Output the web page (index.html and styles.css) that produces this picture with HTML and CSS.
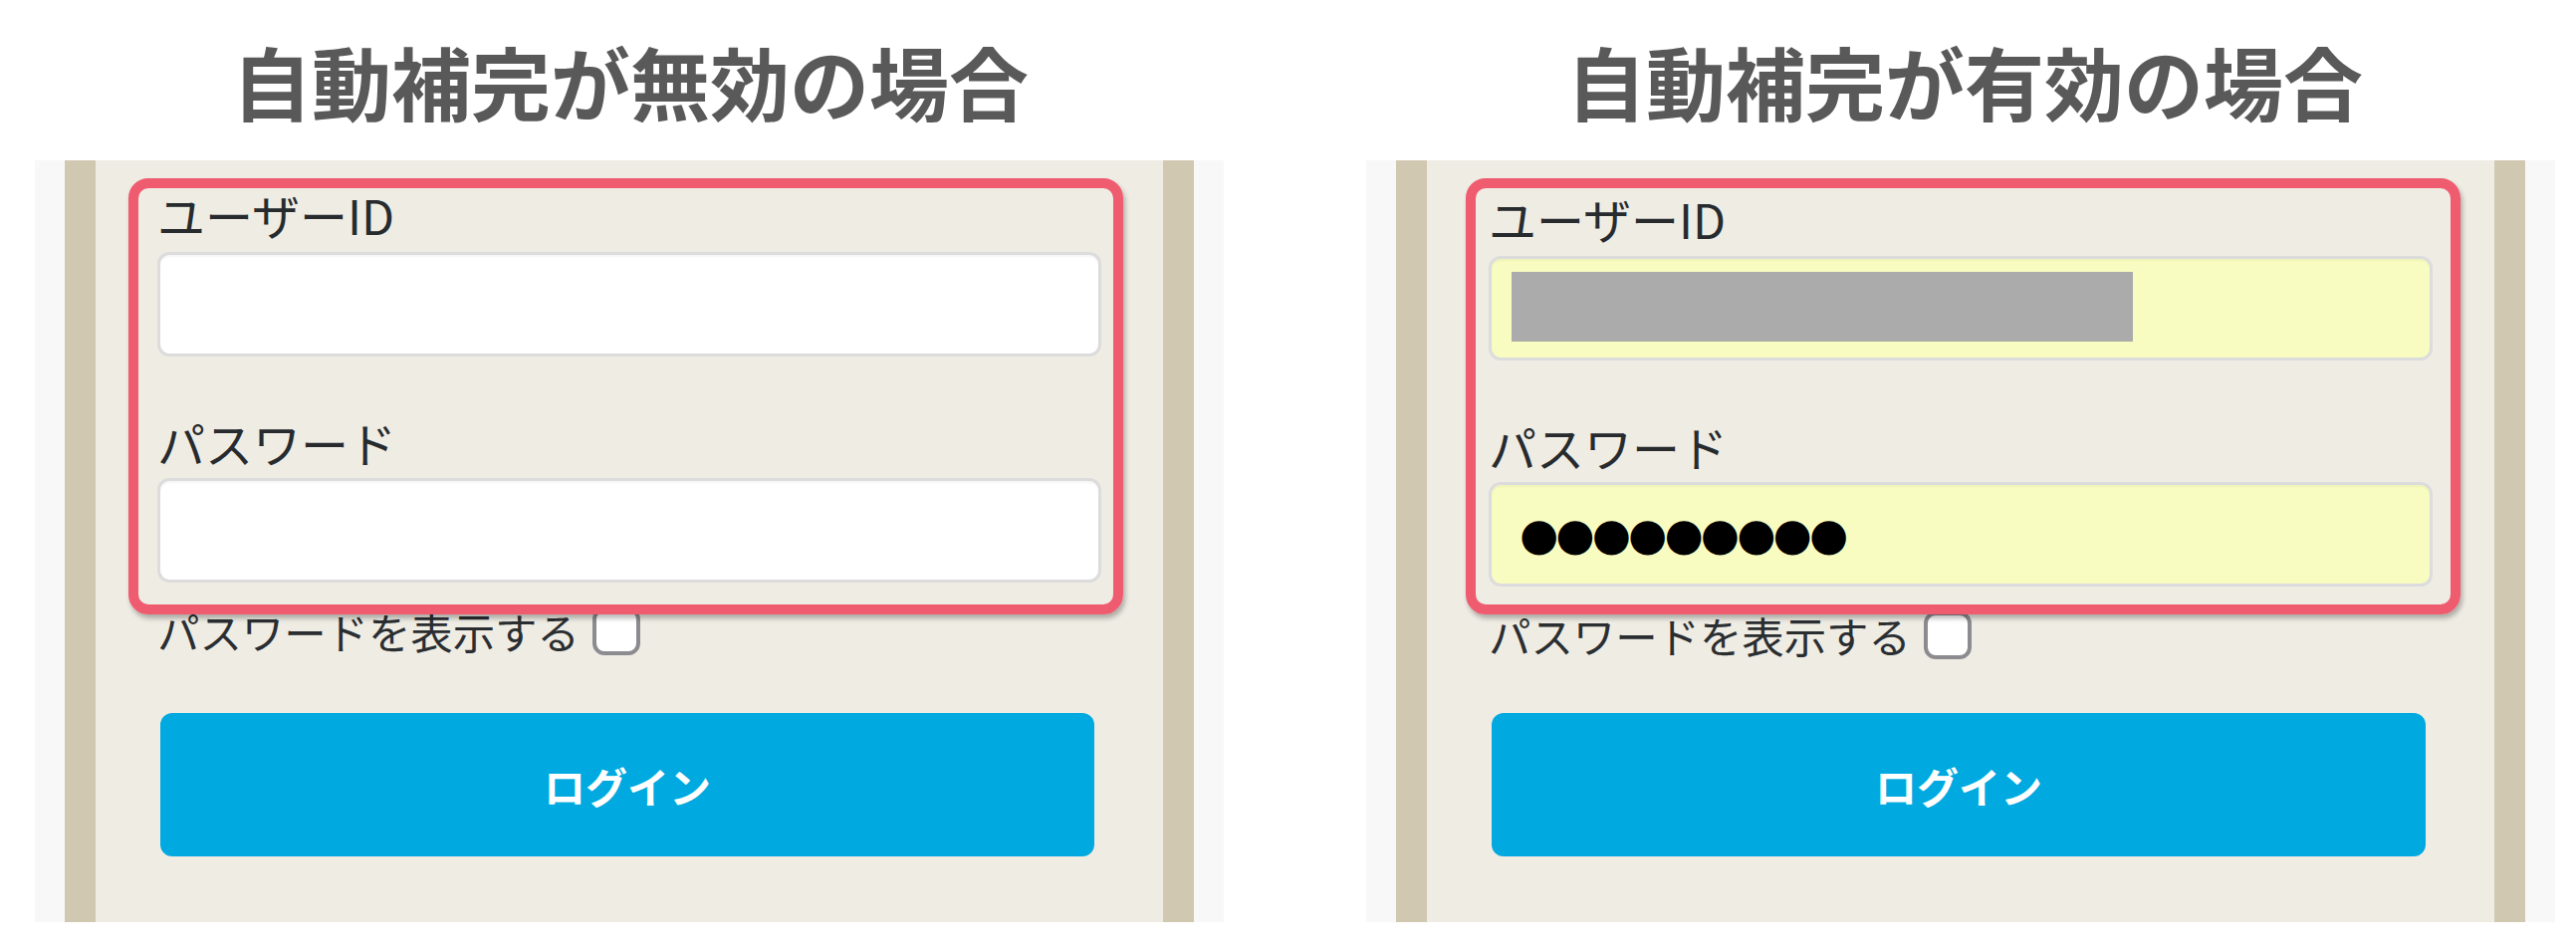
FILE: index.html
```html
<!DOCTYPE html>
<html lang="ja">
<head>
<meta charset="utf-8">
<title>自動補完</title>
<link rel="stylesheet" href="styles.css">
</head>
<body>
<div class="page">
  <section class="col">
    <h1 class="title">自動補完が無効の場合</h1>
    <div class="panel">
      <div class="frame">
        <div class="form">
          <div class="label">ユーザーID</div>
          <div class="field"></div>
          <div class="label label-second">パスワード</div>
          <div class="field"></div>
          <div class="show-row"><span class="show-text">パスワードを表示する</span><span class="checkbox"></span></div>
          <div class="btn">ログイン</div>
        </div>
        <div class="highlight"></div>
      </div>
    </div>
  </section>
  <section class="col col-on">
    <h1 class="title">自動補完が有効の場合</h1>
    <div class="panel">
      <div class="frame">
        <div class="form">
          <div class="label">ユーザーID</div>
          <div class="field field-auto"><div class="redact"></div></div>
          <div class="label label-second">パスワード</div>
          <div class="field field-auto"><span class="dots">●●●●●●●●●</span></div>
          <div class="show-row"><span class="show-text">パスワードを表示する</span><span class="checkbox"></span></div>
          <div class="btn">ログイン</div>
        </div>
        <div class="highlight"></div>
      </div>
    </div>
  </section>
</div>
</body>
</html>
```

FILE: styles.css
```css
html, body {
  margin: 0;
  padding: 0;
  background: #ffffff;
}
body {
  width: 2587px;
  height: 956px;
  overflow: hidden;
  font-family: "Noto Sans CJK JP", "Noto Sans", sans-serif;
}
.page {
  display: flex;
  gap: 143px;
  padding-left: 35px;
}
.col {
  width: 1194px;
  display: flex;
  flex-direction: column;
}
.title {
  margin: 0;
  box-sizing: border-box;
  height: 161px;
  padding: 30px 0 31px 2px;
  line-height: 100px;
  font-size: 80px;
  font-weight: 700;
  color: #595959;
  text-align: center;
  letter-spacing: 0;
}
.col-on .title {
  padding-left: 8px;
}
.panel {
  background: #f8f8f8;
  padding: 0 30px;
  height: 765px;
}
.frame {
  position: relative;
  box-sizing: border-box;
  height: 100%;
  background: #efece4;
  border-left: 31px solid #d0c8b0;
  border-right: 31px solid #d0c8b0;
}
.form {
  display: flex;
  flex-direction: column;
  padding: 24px 62px 0;
}
.col-on .form {
  padding-top: 28px;
}
.label {
  font-size: 48px;
  line-height: 60px;
  height: 60px;
  color: #272b2e;
  margin-bottom: 8px;
  white-space: nowrap;
}
.label-second {
  margin-top: 56px;
  margin-bottom: 6px;
}
.field {
  box-sizing: border-box;
  height: 105px;
  background: #ffffff;
  border: 3px solid #dcdcdc;
  border-radius: 12px;
  box-shadow: inset 0 2px 2px rgba(0, 0, 0, 0.04);
  display: flex;
  align-items: center;
}
.field-auto {
  background: #f9fcc0;
}
.redact {
  width: 624px;
  height: 70px;
  margin-left: 20px;
  margin-top: -4px;
  background: #aaabaa;
}
.dots {
  margin-left: 28px;
  font-family: "DejaVu Sans", sans-serif;
  font-size: 45px;
  line-height: 50px;
  color: #000000;
  letter-spacing: -2.9px;
}
.show-row {
  display: flex;
  align-items: center;
  height: 48px;
  margin-top: 25px;
}
.show-text {
  font-size: 42.4px;
  line-height: 48px;
  color: #2a2e31;
  white-space: nowrap;
}
.checkbox {
  box-sizing: border-box;
  width: 48px;
  height: 48px;
  margin-left: 13px;
  background: #ffffff;
  border: 4px solid #8c8c90;
  border-radius: 12px;
}
.btn {
  box-sizing: border-box;
  width: 938px;
  height: 144px;
  margin-top: 58px;
  margin-left: 3px;
  background: #00a9df;
  border-radius: 12px;
  color: #ffffff;
  font-size: 42px;
  font-weight: 700;
  display: flex;
  align-items: center;
  justify-content: center;
}
.col-on .btn {
  margin-top: 54px;
}
.highlight {
  position: absolute;
  left: 33px;
  top: 18px;
  width: 999px;
  height: 438px;
  box-sizing: border-box;
  border: 10px solid #ef5b6f;
  border-radius: 20px;
  box-shadow: 2px 4px 5px rgba(0, 0, 0, 0.28);
  pointer-events: none;
}
.col-on .highlight {
  left: 39px;
}
```
